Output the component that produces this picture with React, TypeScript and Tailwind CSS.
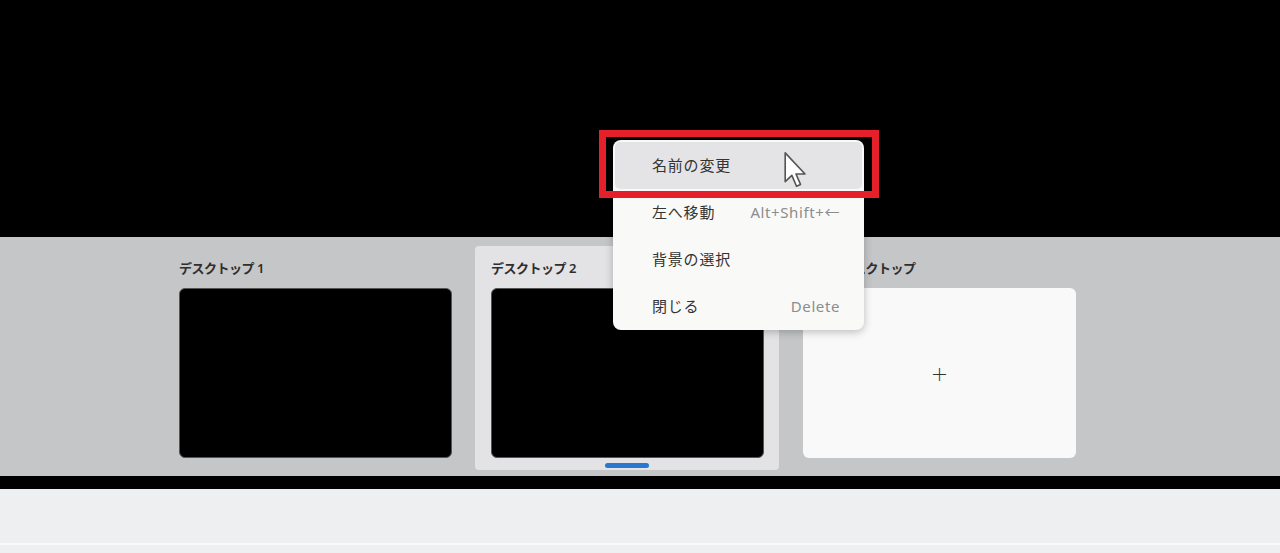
import React from "react";

const font = { fontFamily: '"Noto Sans", "Noto Sans CJK JP", sans-serif' };

function Thumb({ label, selected }: { label: string; selected?: boolean }) {
  return (
    <div
      className={`relative flex flex-col w-[304px] h-[224px] rounded-[4px] px-[16px] pt-[12px] ${
        selected ? "bg-[#e3e2e5]" : ""
      }`}
    >
      <div className="h-[20px] leading-[20px] text-[13px] font-semibold text-[#2e2e2e] tracking-[-0.5px]">{label}</div>
      <div className="mt-[10px] h-[170px] w-[273px] rounded-[6px] bg-black border border-[#555]" />
      {selected && (
        <div className="absolute left-[130px] top-[217px] h-[5px] w-[44px] rounded-full bg-[#2a77cf]" />
      )}
    </div>
  );
}

export default function App() {
  return (
    <div className="relative w-[1280px] h-[553px] bg-black overflow-hidden" style={font}>
      <div className="h-[237px] bg-black" />
      <div className="h-[239px] bg-[#c5c6c8] flex pl-[163px] gap-[8px] pt-[9px]">
        <Thumb label="デスクトップ 1" />
        <Thumb label="デスクトップ 2" selected />
        <div className="flex flex-col w-[304px] h-[224px] px-[16px] pt-[12px]">
          <div className="h-[20px] leading-[20px] text-[13px] font-semibold text-[#2e2e2e] tracking-[-0.5px]">新しいデスクトップ</div>
          <div className="mt-[10px] h-[170px] w-[273px] rounded-[6px] bg-[#f9f9f9] flex items-center justify-center">
            <span className="text-[28px] font-extralight text-[#333] leading-none">+</span>
          </div>
        </div>
      </div>
      <div className="h-[13px] bg-black" />
      <div className="h-[64px] bg-[#eeeff1] flex flex-col">
        <div className="h-[54px]" />
        <div className="h-[2px] bg-[#f9f9fa]" />
      </div>

      {/* context menu */}
      <div className="absolute left-[613px] top-[140px] w-[251px] h-[190px] rounded-[8px] bg-[#f9f9f8] shadow-[0_2px_8px_rgba(0,0,0,0.25)] pt-[2px] px-[2px] flex flex-col">
        {[
          { t: "名前の変更", s: "", h: true },
          { t: "左へ移動", s: "Alt+Shift+←" },
          { t: "背景の選択", s: "" },
          { t: "閉じる", s: "Delete" },
        ].map((it) => (
          <div
            key={it.t}
            className={`h-[47px] flex items-center justify-between pl-[37px] pr-[22px] rounded-[5px] ${
              it.h ? "bg-[#e4e3e6]" : ""
            }`}
          >
            <span className="text-[15px] tracking-[0.8px] text-[#333]">{it.t}</span>
            <span className="text-[15px] tracking-[0.6px] text-[#8c8c8c]">{it.s}</span>
          </div>
        ))}
      </div>

      {/* red highlight */}
      <div className="absolute left-[599px] top-[130px] w-[280px] h-[68px] border-[7px] border-[#e6202a]" />

      {/* cursor */}
      <svg className="absolute left-[784px] top-[152px]" width="24" height="36" viewBox="0 0 13 20">
        <path
          d="M0.5 0.5 L0.5 16.5 L4.2 13 L6.8 19 L9 18 L6.5 12.2 L11.5 12.2 Z"
          fill="#fff"
          stroke="#555"
          strokeWidth="0.9"
          strokeLinejoin="round"
        />
      </svg>
    </div>
  );
}
